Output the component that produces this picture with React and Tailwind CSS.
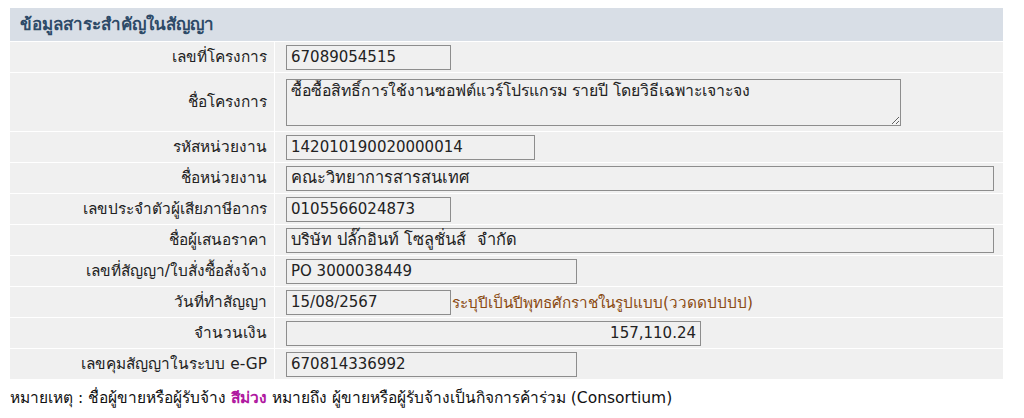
import React from 'react';

const rows = [
  { label: 'เลขที่โครงการ', value: '67089054515', w: 'w-[165px]' },
  { label: 'ชื่อโครงการ', value: 'ซื้อซื้อสิทธิ์การใช้งานซอฟต์แวร์โปรแกรม รายปี โดยวิธีเฉพาะเจาะจง', area: true },
  { label: 'รหัสหน่วยงาน', value: '142010190020000014', w: 'w-[249px]' },
  { label: 'ชื่อหน่วยงาน', value: 'คณะวิทยาการสารสนเทศ', w: 'w-[708px]', thai: true },
  { label: 'เลขประจำตัวผู้เสียภาษีอากร', value: '0105566024873', w: 'w-[165px]' },
  { label: 'ชื่อผู้เสนอราคา', value: 'บริษัท ปลั๊กอินท์ โซลูชั่นส์  จำกัด', w: 'w-[708px]', thai: true },
  { label: 'เลขที่สัญญา/ใบสั่งซื้อสั่งจ้าง', value: 'PO 3000038449', w: 'w-[291px]' },
  { label: 'วันที่ทำสัญญา', value: '15/08/2567', w: 'w-[165px]', hint: 'ระบุปีเป็นปีพุทธศักราชในรูปแบบ(ววดดปปปป)' },
  { label: 'จำนวนเงิน', value: '157,110.24', w: 'w-[415px]', right: true },
  { label: 'เลขคุมสัญญาในระบบ e-GP', value: '670814336992', w: 'w-[291px]' },
];

function Field({ row }) {
  if (row.area) {
    return (
      <textarea
        readOnly
        defaultValue={row.value}
        className="w-[615px] h-[47px] border border-[#8d8d8d] bg-[#f0f0f0] px-[4px] py-[1px] text-[15.8px] leading-[20px] text-[#222] outline-none"
      />
    );
  }
  return (
    <div className={`${row.w} h-[25px] border border-[#8d8d8d] bg-[#f0f0f0] px-[4px] pt-[1px] flex items-center ${row.thai ? 'text-[16.4px]' : 'text-[15px]'} text-[#222] whitespace-pre ${row.right ? 'justify-end' : ''}`}>
      {row.value}
    </div>
  );
}

export default function App() {
  return (
    <div className="bg-white w-[1024px] h-[418px] pt-[8px] pl-[10px] font-['DejaVu_Sans',sans-serif] text-[#222]">
      <div className="w-[993px]">
        <div className="h-[33px] bg-[#d8dee6] flex items-center pl-[10px] text-[17px] font-bold text-[#2d4a68]">
          ข้อมูลสาระสำคัญในสัญญา
        </div>
        {rows.map((row) => (
          <div key={row.label} className={`flex border-t border-white bg-[#f0f0f0] ${row.area ? 'h-[59px]' : 'h-[31px]'}`}>
            <div className="w-[265px] border-r border-white flex items-center justify-end pr-[7px] pt-[2px] text-[15.4px]">
              {row.label}
            </div>
            <div className="flex-1 flex items-center pl-[11px]">
              <Field row={row} />
              {row.hint && <span className="text-[15.3px] text-[#8a4a12] pl-[1px] pt-[2px]">{row.hint}</span>}
            </div>
          </div>
        ))}
      </div>
      <div className="mt-[8px] text-[15.5px] text-[#111]">
        หมายเหตุ : ชื่อผู้ขายหรือผู้รับจ้าง <span className="font-bold text-[#b0189f]">สีม่วง</span> หมายถึง ผู้ขายหรือผู้รับจ้างเป็นกิจการค้าร่วม (Consortium)
      </div>
    </div>
  );
}
